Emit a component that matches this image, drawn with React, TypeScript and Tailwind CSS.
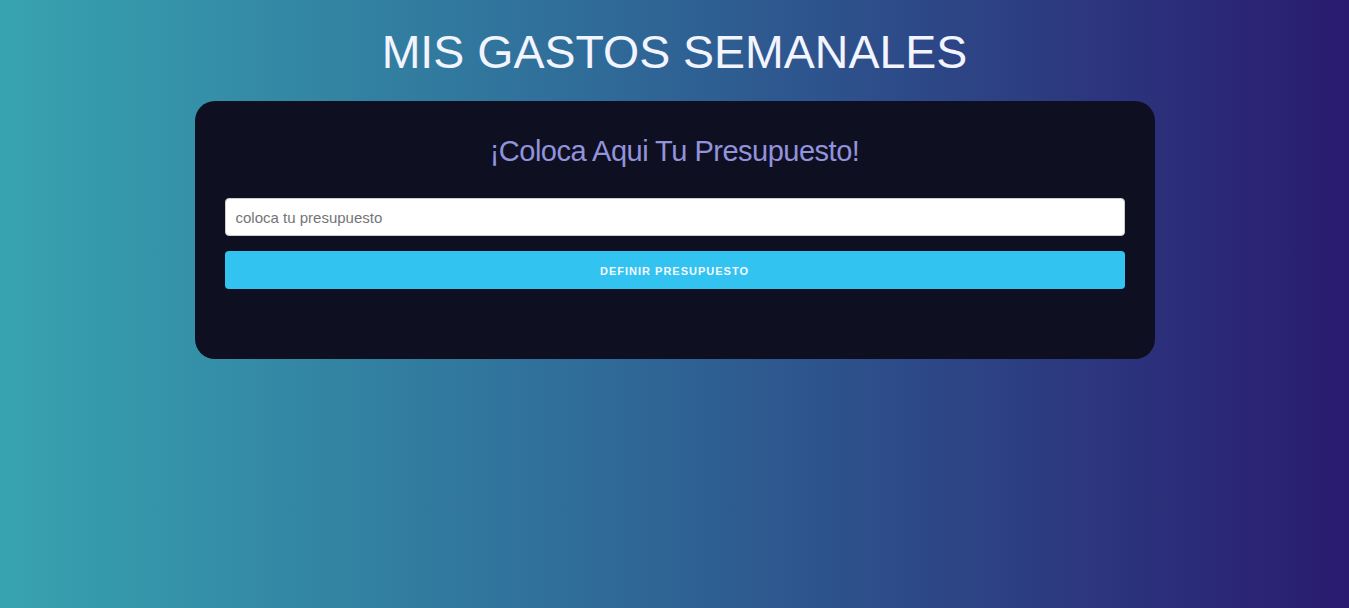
import React from "react";

export default function App() {
  return (
    <div
      className="min-h-[608px] w-full bg-[linear-gradient(90deg,#37a3b0_0%,#2f6a98_45%,#2a1b70_100%)] pt-[22px]"
      style={{ fontFamily: '"Liberation Sans", Arial, sans-serif' }}
    >
      <h1 className="text-center text-[46.5px] leading-[60px] font-normal text-[#f2f4ff]">
        MIS GASTOS SEMANALES
      </h1>
      <div className="mx-auto mt-[19px] w-[960px] rounded-[20px] bg-[#0e0f21] px-[30px] pt-[30px] pb-[70px]">
        <h2 className="text-center text-[29px] leading-[40px] tracking-[-0.5px] text-[#9193dc]">
          ¡Coloca Aqui Tu Presupuesto!
        </h2>
        <input
          type="text"
          placeholder="coloca tu presupuesto"
          className="mt-[27px] block h-[38px] w-full rounded-[4px] border border-[#cccccc] bg-white px-[10px] text-[15px] text-[#333] placeholder:text-[#757575] outline-none"
        />
        <button className="mt-[15px] block h-[38px] w-full rounded-[4px] bg-[#32c3f0] pt-[2px] text-[11px] font-bold tracking-[1px] text-[#f4f9ff]">
          DEFINIR PRESUPUESTO
        </button>
      </div>
    </div>
  );
}
